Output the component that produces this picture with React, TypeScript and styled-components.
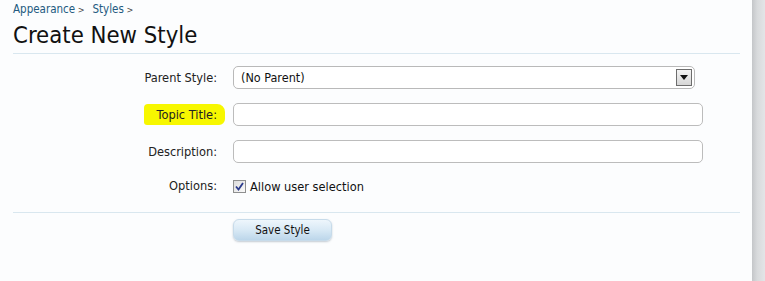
import React from "react";
import styled, { createGlobalStyle } from "styled-components";

const Global = createGlobalStyle`
  html, body { margin: 0; padding: 0; }
  body {
    background: #fcfdfe;
    font-family: Tahoma, "DejaVu Sans Condensed", "DejaVu Sans", sans-serif;
    color: #222;
  }
`;

const Shell = styled.div`
  display: flex;
  width: 765px;
  height: 281px;
  overflow: hidden;
`;

const Main = styled.div`
  flex: 1;
  padding: 3px 12px 0 13px;
  background: #fcfdfe;
`;

const SideStrip = styled.div`
  width: 13px;
  background: linear-gradient(to right, #c4c6c9 0%, #d8dadc 40%, #e4e5e7 100%);
`;

const Breadcrumb = styled.div`
  display: flex;
  gap: 8px;
  font-size: 11.5px;
  line-height: 13px;
  color: #235a80;
`;

const Crumb = styled.span`
  &::after {
    content: " >";
    color: #444;
    font-size: 9px;
  }
`;

const Title = styled.h1`
  margin: 4px 0 0 0;
  font-size: 23.7px;
  font-weight: normal;
  line-height: 29px;
  color: #111;
  padding-bottom: 3px;
  border-bottom: 1px solid #d9e7ef;
`;

const Form = styled.div`
  display: grid;
  grid-template-columns: 204px 470px;
  column-gap: 16px;
  row-gap: 14px;
  padding-top: 12px;
  align-items: center;
`;

const Label = styled.div<{ $highlight?: boolean }>`
  text-align: right;
  font-size: 12.7px;
  color: #222;
  justify-self: end;
  padding: ${(p) => (p.$highlight ? "3px 8px 3px 13px" : "0")};
  margin-right: ${(p) => (p.$highlight ? "-8px" : "0")};
  background: ${(p) => (p.$highlight ? "#f7f700" : "transparent")};
  border-radius: ${(p) => (p.$highlight ? "4px 8px 6px 3px" : "0")};
`;

const SelectBox = styled.div`
  width: 462px;
  height: 23px;
  box-sizing: border-box;
  border: 1px solid #b9b9b9;
  border-radius: 5px;
  background: #fff;
  display: flex;
  align-items: center;
  justify-content: space-between;
  padding: 0 2px 0 7px;
  font-size: 12.5px;
  color: #111;
`;

const DropButton = styled.div`
  width: 16px;
  height: 17px;
  box-sizing: border-box;
  border: 1px solid #6d6d6d;
  background: linear-gradient(#f4f4f4, #d6d6d6);
  display: flex;
  align-items: center;
  justify-content: center;
`;

const TextInput = styled.div`
  width: 470px;
  height: 23px;
  box-sizing: border-box;
  border: 1px solid #bcbcbc;
  border-radius: 5px;
  background: #fff;
`;

const OptionLine = styled.div`
  display: flex;
  align-items: center;
  gap: 4px;
  font-size: 12.7px;
  color: #111;
  padding-top: 2px;
`;

const Check = styled.div`
  width: 13px;
  height: 13px;
  box-sizing: border-box;
  border: 1px solid #8e8f8f;
  background: linear-gradient(135deg, #dcdcdc, #fafafa);
  display: flex;
  align-items: center;
  justify-content: center;
`;

const Divider = styled.div`
  border-top: 1px solid #d9e7ef;
  margin-top: 18px;
`;

const Actions = styled.div`
  padding: 6px 0 0 220px;
`;

const Button = styled.div`
  width: 99px;
  height: 22px;
  box-sizing: border-box;
  border-radius: 6px;
  background: linear-gradient(#eef6fc 0%, #d8e9f5 50%, #bcd6ea 100%);
  border: 1px solid #c7dbea;
  box-shadow: 0 1px 2px rgba(90, 110, 130, 0.35);
  display: flex;
  align-items: center;
  justify-content: center;
  font-size: 11.5px;
  color: #111;
`;

export default function App() {
  return (
    <>
      <Global />
      <Shell>
        <Main>
          <Breadcrumb>
            <Crumb>Appearance</Crumb>
            <Crumb>Styles</Crumb>
          </Breadcrumb>
          <Title>Create New Style</Title>
          <Form>
            <Label>Parent Style:</Label>
            <SelectBox>
              <span>(No Parent)</span>
              <DropButton>
                <svg width="8" height="5" viewBox="0 0 8 5">
                  <path d="M0 0 H8 L4 5 Z" fill="#111" />
                </svg>
              </DropButton>
            </SelectBox>
            <Label $highlight>Topic Title:</Label>
            <TextInput />
            <Label>Description:</Label>
            <TextInput />
            <Label>Options:</Label>
            <OptionLine>
              <Check>
                <svg width="9" height="9" viewBox="0 0 9 9">
                  <path d="M1 4.5 L3.5 7.5 L8 1" stroke="#2a3a8c" strokeWidth="1.8" fill="none" />
                </svg>
              </Check>
              <span>Allow user selection</span>
            </OptionLine>
          </Form>
          <Divider />
          <Actions>
            <Button>Save Style</Button>
          </Actions>
        </Main>
        <SideStrip />
      </Shell>
    </>
  );
}
